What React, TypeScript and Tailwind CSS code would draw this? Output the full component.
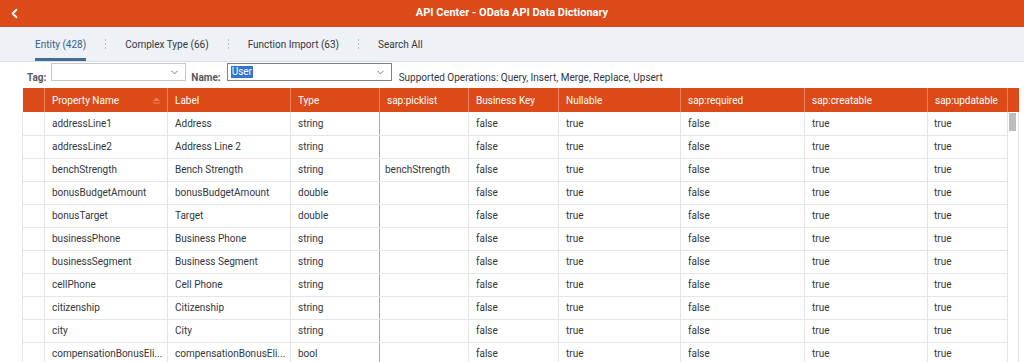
import { ChevronLeft, ChevronDown } from "lucide-react";

const rows: [string, string, string, string][] = [
  ["addressLine1", "Address", "string", ""],
  ["addressLine2", "Address Line 2", "string", ""],
  ["benchStrength", "Bench Strength", "string", "benchStrength"],
  ["bonusBudgetAmount", "bonusBudgetAmount", "double", ""],
  ["bonusTarget", "Target", "double", ""],
  ["businessPhone", "Business Phone", "string", ""],
  ["businessSegment", "Business Segment", "string", ""],
  ["cellPhone", "Cell Phone", "string", ""],
  ["citizenship", "Citizenship", "string", ""],
  ["city", "City", "string", ""],
  ["compensationBonusEli...", "compensationBonusEli...", "bool", ""],
];

const headers = [
  "Property Name",
  "Label",
  "Type",
  "sap:picklist",
  "Business Key",
  "Nullable",
  "sap:required",
  "sap:creatable",
  "sap:updatable",
];

const widths = [22, 123, 123, 89, 89, 90, 122, 124, 123, 80, 11];

function Dots() {
  return (
    <svg width="3" height="12" viewBox="0 0 3 12" className="mx-[18px]">
      <rect x="1" y="1" width="1" height="2" fill="#b9bec4" />
      <rect x="1" y="5" width="1" height="2" fill="#b9bec4" />
      <rect x="1" y="9" width="1" height="2" fill="#b9bec4" />
    </svg>
  );
}

export default function App() {
  return (
    <div className="h-[362px] w-[1024px] overflow-hidden bg-white font-['Roboto',sans-serif] text-[10px] text-[#32363a]">
      {/* shell bar */}
      <div className="relative flex h-[27px] items-center justify-center bg-[#dc4a17]">
        <ChevronLeft className="absolute left-[7px] top-[6px] text-white" size={15} strokeWidth={3} />
        <span className="text-[11px] font-bold text-white">API Center - OData API Data Dictionary</span>
      </div>

      {/* tabs */}
      <div className="flex h-[35px] items-stretch border-b border-[#d8dee6] bg-[#eef2f7] pl-[35px]">
        <div className="flex items-center border-b-[3px] border-[#456c92] pt-[3px] text-[#36608a]">Entity (428)</div>
        <div className="flex items-center">
          <Dots />
          <span>Complex Type (66)</span>
          <Dots />
          <span>Function Import (63)</span>
          <Dots />
          <span>Search All</span>
        </div>
      </div>

      {/* filters */}
      <div className="flex h-[26px] items-end pb-[3px] pl-[27px]">
        <span className="mr-[5px] font-bold text-[#55595e]">Tag:</span>
        <div className="mb-[4px] flex h-[18px] w-[135px] items-center justify-end border border-[#c5c9cd] bg-white pr-[5px]">
          <ChevronDown size={11} className="text-[#6a6d70]" />
        </div>
        <span className="ml-[5px] mr-[6px] font-bold text-[#55595e]">Name:</span>
        <div className="mb-[4px] flex h-[18px] w-[165px] items-center justify-between border border-[#7c8288] bg-white pl-[3px] pr-[5px]">
          <span className="bg-[#3572d4] px-[1px] leading-[12px] text-white">User</span>
          <ChevronDown size={11} className="text-[#6a6d70]" />
        </div>
        <span className="ml-[7px]">Supported Operations: Query, Insert, Merge, Replace, Upsert</span>
      </div>

      {/* table */}
      <div className="ml-[22px] w-[996px]">
        <table className="w-[996px] table-fixed border-collapse">
          <colgroup>
            {widths.map((w, i) => (
              <col key={i} style={{ width: w }} />
            ))}
          </colgroup>
          <thead>
            <tr className="h-[24px] bg-[#dc4a17] text-left text-white">
              <th className="border-r border-[#e9835c]" />
              {headers.map((h, i) => (
                <th key={h} className="relative border-r border-[#e9835c] px-[7px] font-normal">
                  {h}
                  {i === 0 && (
                    <svg width="9" height="7" viewBox="0 0 9 7" className="absolute right-[6px] top-[9px]">
                      <path d="M4.5 0.5 L8 4 H1 Z" fill="#e9825b" />
                      <rect x="1" y="5.5" width="7" height="1" fill="#e9825b" />
                    </svg>
                  )}
                </th>
              ))}
              <th />
            </tr>
          </thead>
          <tbody>
            {rows.map((r, idx) => (
              <tr key={r[0]} className="h-[23px]">
                <td className="border-b border-l border-r border-[#e5e5e5]" />
                <td className="overflow-hidden whitespace-nowrap border-b border-r border-[#e5e5e5] pl-[7px]">{r[0]}</td>
                <td className="overflow-hidden whitespace-nowrap border-b border-r border-[#e5e5e5] pl-[7px]">{r[1]}</td>
                <td className="border-b border-r border-b-[#e5e5e5] border-r-[#a9a9a9] px-[7px]">{r[2]}</td>
                <td className="border-b border-r border-[#e5e5e5] px-[5px]">{r[3]}</td>
                <td className="border-b border-r border-[#e5e5e5] px-[7px]">false</td>
                <td className="border-b border-r border-[#e5e5e5] px-[7px]">true</td>
                <td className="border-b border-r border-[#e5e5e5] px-[7px]">false</td>
                <td className="border-b border-r border-[#e5e5e5] px-[7px]">true</td>
                <td className="border-b border-r border-[#e5e5e5] px-[6px]">true</td>
                <td className="relative border-r border-[#e5e5e5]">
                  {idx === 0 && <div className="absolute left-[1px] top-[1px] h-[18px] w-[7px] bg-[#bdbdbd]" />}
                </td>
              </tr>
            ))}
          </tbody>
        </table>
      </div>
    </div>
  );
}
